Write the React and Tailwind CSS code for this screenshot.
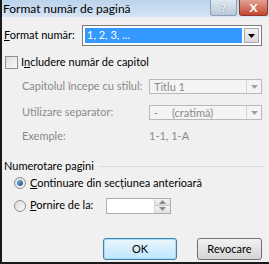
import React from 'react'

const FONT = 'font-["Lato","Liberation_Sans",sans-serif]'

function Arrow({ color = '#000' }) {
  return (
    <svg width="7" height="4" viewBox="0 0 7 4">
      <path d="M0 0h7L3.5 4z" fill={color} />
    </svg>
  )
}

function DisabledCombo({ children }) {
  return (
    <div className="flex h-[15px] w-[113px] border border-[#b9b9b9] bg-[#f4f4f4]">
      <div className="flex flex-1 items-center whitespace-nowrap pl-[4px] leading-none text-[#8a8a8a]">{children}</div>
      <div className="flex w-[15px] items-center justify-center border-l border-[#d4d4d4]">
        <Arrow color="#a0a0a0" />
      </div>
    </div>
  )
}

function Radio({ checked }) {
  return (
    <div className="flex h-[12px] w-[12px] items-center justify-center rounded-full border border-[#8e8f8f] bg-gradient-to-br from-[#dcdcdc] to-[#fafafa]">
      {checked && <div className="h-[6px] w-[6px] rounded-full bg-gradient-to-br from-[#7fb3e6] to-[#1d4f8e]" />}
    </div>
  )
}

export default function App() {
  return (
    <div className={`flex h-[264px] w-[269px] flex-col overflow-hidden whitespace-nowrap border-b-2 border-l-2 border-[#1a1a1a] bg-[#f0f0f0] text-[11px] text-black ${FONT}`}>
      {/* title bar */}
      <div className="flex h-[17px] items-start bg-gradient-to-b from-[#bcd3ec] to-[#d6e4f3]">
        <div className="flex-1 pl-[1px] pt-[1px] text-[12px] leading-[15px]">Format număr de pagină</div>
        <div className="flex h-[16px] w-[27px] items-center justify-center rounded-b-[3px] border border-t-0 border-[#8aa0b8] bg-gradient-to-b from-[#dfe8f2] to-[#b9c9da] text-[12px] font-bold leading-none text-white [text-shadow:0_0_1px_#4a5a70]">?</div>
        <div className="ml-[2px] mr-[1px] flex h-[16px] w-[29px] items-center justify-center rounded-b-[3px] border border-t-0 border-[#8c3a2e] bg-gradient-to-b from-[#e3a193] to-[#c3452f] text-[12px] font-bold leading-none text-white">X</div>
      </div>

      {/* format number */}
      <div className="mt-[8px] flex h-[21px] items-center pl-[2px]">
        <div className="w-[78px]"><span className="underline">F</span>ormat număr:</div>
        <div className="flex h-[21px] w-[180px] border border-[#7a7a7a] bg-white p-[2px]">
          <div className="flex flex-1 items-center bg-[#3399ff] pl-[2px] text-white">1, 2, 3, ...</div>
          <div className="ml-[2px] flex w-[15px] items-center justify-center border border-[#a7a7a7] bg-gradient-to-b from-[#f3f3f3] to-[#d9d9d9]">
            <Arrow />
          </div>
        </div>
      </div>

      {/* include chapter */}
      <div className="mt-[9px] flex h-[14px] items-center pl-[3px]">
        <div className="h-[13px] w-[13px] border border-[#8e8f8f] bg-gradient-to-br from-[#dcdcdc] to-[#fbfbfb]" />
        <div className="ml-[3px]">I<span className="underline">n</span>cludere număr de capitol</div>
      </div>

      <div className="mt-[10px] flex h-[15px] items-center pl-[20px] text-[#8a8a8a]">
        <div className="w-[127px]">Capitolul începe cu stilul:</div>
        <DisabledCombo>Titlu 1</DisabledCombo>
      </div>

      <div className="mt-[11px] flex h-[15px] items-center pl-[20px] text-[#8a8a8a]">
        <div className="w-[127px]">Utilizare separator:</div>
        <DisabledCombo>
          <span className="w-[18px]">-</span>(cratimă)
        </DisabledCombo>
      </div>

      <div className="mt-[9px] flex h-[14px] items-center pl-[20px] text-[#8a8a8a]">
        <div className="w-[127px]">Exemple:</div>
        <div>1-1, 1-A</div>
      </div>

      {/* page numbering */}
      <div className="mt-[16px] flex h-[14px] items-center pl-[2px]">
        <div>Numerotare pagini</div>
        <div className="ml-[4px] mr-[5px] h-px flex-1 bg-[#d5dfe5]" />
      </div>

      <div className="mt-[3px] flex h-[14px] items-center pl-[12px]">
        <Radio checked />
        <div className="ml-[4px]"><span className="underline">C</span>ontinuare din secțiunea anterioară</div>
      </div>

      <div className="mt-[8px] flex h-[15px] items-center pl-[12px]">
        <Radio />
        <div className="ml-[4px] w-[76px]"><span className="underline">P</span>ornire de la:</div>
        <div className="flex h-[16px] w-[65px] border border-[#abadb3] bg-white">
          <div className="flex-1" />
          <div className="flex w-[16px] flex-col border-l border-[#d6d6d6]">
            <div className="flex flex-1 items-center justify-center border-b border-[#c8c8c8] bg-gradient-to-b from-[#f4f4f4] to-[#e0e0e0]">
              <svg width="7" height="4" viewBox="0 0 7 4"><path d="M0 4h7L3.5 0z" fill="#8a8a8a" /></svg>
            </div>
            <div className="flex flex-1 items-center justify-center bg-gradient-to-b from-[#f4f4f4] to-[#e0e0e0]">
              <Arrow color="#8a8a8a" />
            </div>
          </div>
        </div>
      </div>

      {/* buttons */}
      <div className="mt-[25px] flex h-[22px] pl-[101px]">
        <div className="flex w-[74px] items-center justify-center rounded-[3px] border border-[#3c7fb1] bg-gradient-to-b from-[#eaf6fd] to-[#bee6fd] shadow-[inset_0_0_0_1px_#a9dcf7]">OK</div>
        <div className="ml-[20px] flex w-[65px] items-center justify-center rounded-[3px] border border-[#707070] bg-gradient-to-b from-[#f2f2f2] to-[#d4d4d4]">Revocare</div>
      </div>
    </div>
  )
}
